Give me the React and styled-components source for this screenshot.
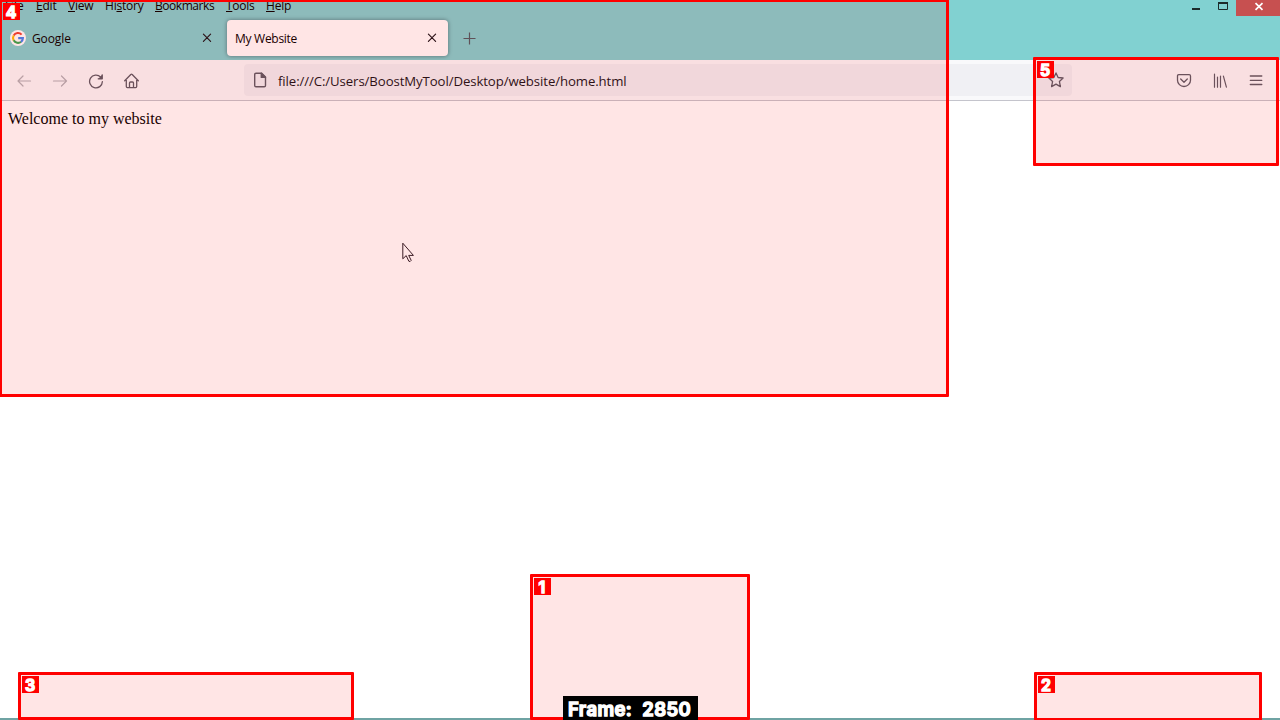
import React from 'react';
import styled, { createGlobalStyle } from 'styled-components';

const GlobalStyle = createGlobalStyle`
  * { box-sizing: border-box; }
  body { margin: 0; overflow: hidden; background: #fff; }
`;

const Screen = styled.div`
  position: relative;
  display: flex;
  flex-direction: column;
  width: 1280px;
  height: 720px;
  overflow: hidden;
  background: #fff;
  color: #15141a;
  font-family: 'Open Sans', 'Noto Sans', sans-serif;
`;

const TitleBar = styled.header`
  display: flex;
  flex-direction: column;
  flex: none;
  height: 60px;
  background: #81d1d1;
`;

const TopRow = styled.div`
  display: flex;
  justify-content: space-between;
  height: 16px;
`;

const Menu = styled.nav`
  display: flex;
  padding-left: 5px;
  color: #000;
`;

const MenuItem = styled.span`
  width: ${(p) => p.$width}px;
  font-size: 12px;
  line-height: 16px;
  height: 16px;
  margin-top: -2px;
  letter-spacing: ${(p) => p.$tracking || 0}px;
  white-space: nowrap;
  u { text-underline-offset: 1px; text-decoration-thickness: 1px; }
`;

const WindowControls = styled.div`
  display: flex;
`;

const ControlButton = styled.div`
  width: ${(p) => p.$width}px;
  height: 16px;
  background: ${(p) => (p.$close ? '#c75050' : 'transparent')};
  svg { display: block; }
`;

const TabStrip = styled.div`
  display: flex;
  height: 44px;
  padding: 4px 0 4px 2px;
`;

const Tab = styled.div`
  display: flex;
  align-items: center;
  width: ${(p) => (p.$active ? 221 : 225)}px;
  height: 36px;
  padding: 0 8px;
  padding-right: ${(p) => (p.$active ? 11 : 15)}px;
  border-radius: 4px;
  background: ${(p) => (p.$active ? '#fff' : 'transparent')};
  box-shadow: ${(p) => (p.$active ? '0 0 4px rgba(20, 50, 60, 0.55)' : 'none')};
`;

const TabTitle = styled.span`
  flex: 1;
  margin-left: ${(p) => (p.$icon ? 6 : 0)}px;
  padding-top: 2px;
  color: #000;
  font-size: 12px;
  line-height: 16px;
  letter-spacing: ${(p) => p.$tracking || 0}px;
`;

const NewTab = styled.div`
  display: flex;
  align-items: center;
  margin-left: 15px;
`;

const Toolbar = styled.div`
  display: flex;
  flex: none;
  align-items: center;
  height: 41px;
  padding: 0 6px 0 6px;
  background: #f9f9fb;
  border-bottom: 1px solid #c4c4cc;
  color: #5b5b66;
`;

const ToolButton = styled.div`
  display: flex;
  align-items: center;
  justify-content: center;
  width: 36px;
  height: 32px;
  padding-top: 1px;
  opacity: ${(p) => (p.$disabled ? 0.45 : 1)};
`;

const AddressBar = styled.div`
  display: flex;
  align-items: center;
  width: 828px;
  height: 32px;
  margin: 0 94px;
  padding: 0 8px;
  border-radius: 4px;
  background: #f0f0f4;
`;

const Address = styled.span`
  flex: 1;
  margin-left: 10px;
  padding-top: 2px;
  color: #15141a;
  font-size: 13.2px;
  line-height: 20px;
  letter-spacing: -0.09px;
`;

const Content = styled.main`
  flex: 1;
  padding: 9px 8px;
  color: #000;
  font-family: 'Liberation Serif', serif;
  font-size: 16px;
  line-height: 18px;
`;

const TaskbarEdge = styled.div`
  flex: none;
  height: 2px;
  background: #6fa3a3;
`;

const Region = styled.div`
  position: absolute;
  left: ${(p) => p.$x}px;
  top: ${(p) => p.$y}px;
  width: ${(p) => p.$w}px;
  height: ${(p) => p.$h}px;
  padding: 1px;
  border: 3px solid #f00;
  border-radius: 1px;
  background: rgba(255, 0, 0, 0.1);
  background-clip: padding-box;
`;

const RegionNumber = styled.div`
  width: 17px;
  height: 17px;
  background: #f00;
  color: #fff;
  font: 600 16px/18px Inter, sans-serif;
  text-align: center;
  text-indent: -1px;
  -webkit-text-stroke: 1.4px #fff;
`;

const FrameCaption = styled.div`
  position: absolute;
  left: 563px;
  top: 696px;
  width: 135px;
  height: 24px;
  padding-left: 5px;
  background: #000;
  color: #fff;
  font: 600 18.5px/27px Inter, sans-serif;
  letter-spacing: 0.4px;
  white-space: pre;
  -webkit-text-stroke: 1.4px #fff;
`;

const Pointer = styled.svg`
  position: absolute;
  left: 402px;
  top: 242px;
`;

const Stroke = ({ size = 16, width = 1.2, children }) => (
  <svg width={size} height={size} viewBox="0 0 16 16" fill="none" stroke="currentColor" strokeWidth={width} strokeLinecap="round" strokeLinejoin="round">
    {children}
  </svg>
);

const GoogleIcon = () => (
  <svg width="16" height="16" viewBox="0 0 16 16">
    <circle cx="8" cy="8" r="8" fill="#fff" />
    <g fill="none" strokeWidth="2.1">
      <path d="M3.7 5.6A4.9 4.9 0 0 1 11.6 4.6" stroke="#ea4335" />
      <path d="M3.7 5.5A4.9 4.9 0 0 0 3.7 10.5" stroke="#fbbc05" />
      <path d="M3.7 10.3A4.9 4.9 0 0 0 11.1 11.8" stroke="#34a853" />
      <path d="M11 11.8A4.9 4.9 0 0 0 12.9 8.1H8.2" stroke="#4285f4" />
    </g>
  </svg>
);

const CloseIcon = () => (
  <svg width="10" height="10" viewBox="0 0 10 10" stroke="#15141a" strokeWidth="1.15" strokeLinecap="round">
    <path d="M1.4 1.2l7.2 7.2M8.6 1.2L1.4 8.4" />
  </svg>
);

const MENU = [
  ['F', 'ile', 31, -0.1],
  ['E', 'dit', 32, -0.2],
  ['V', 'iew', 37, -0.2],
  ['Hi', 'story', 50, -0.2],
  ['B', 'ookmarks', 71, -0.45],
  ['T', 'ools', 40, -0.3],
  ['H', 'elp', 40, -0.2],
];

const REGIONS = [
  { n: 1, x: 530, y: 574, w: 220, h: 146 },
  { n: 2, x: 1034, y: 672, w: 228, h: 49 },
  { n: 3, x: 18, y: 672, w: 336, h: 48 },
  { n: 4, x: -1, y: -1, w: 950, h: 398 },
  { n: 5, x: 1033, y: 57, w: 246, h: 109 },
];

export default function App() {
  return (
    <Screen>
      <GlobalStyle />
      <TitleBar>
        <TopRow>
          <Menu>
            {MENU.map(([key, rest, width, tracking]) => (
              <MenuItem key={key} $width={width} $tracking={tracking}>
                {key === 'Hi' ? <>Hi<u>s</u>tory</> : <><u>{key}</u>{rest}</>}
              </MenuItem>
            ))}
          </Menu>
          <WindowControls>
            <ControlButton $width={26}>
              <svg width="26" height="16"><path d="M8 9h8" stroke="#1d2b2b" strokeWidth="2" /></svg>
            </ControlButton>
            <ControlButton $width={26}>
              <svg width="26" height="16"><path d="M8.5 3v6.5h9V3" fill="none" stroke="#1d2b2b" /><path d="M8 3h10" stroke="#1d2b2b" strokeWidth="2" /></svg>
            </ControlButton>
            <ControlButton $width={44} $close>
              <svg width="44" height="16"><path d="M19.5 3.2l7 6.6M26.5 3.2l-7 6.6" stroke="#fff" strokeWidth="1.7" /></svg>
            </ControlButton>
          </WindowControls>
        </TopRow>
        <TabStrip>
          <Tab>
            <GoogleIcon />
            <TabTitle $icon $tracking={-0.1}>Google</TabTitle>
            <CloseIcon />
          </Tab>
          <Tab $active>
            <TabTitle $tracking={-0.28}>My Website</TabTitle>
            <CloseIcon />
          </Tab>
          <NewTab>
            <svg width="13" height="13" viewBox="0 0 13 13" stroke="#4d5b63" strokeWidth="1.2"><path d="M6.5 .5v12M.5 6.5h12" /></svg>
          </NewTab>
        </TabStrip>
      </TitleBar>

      <Toolbar>
        <ToolButton $disabled><Stroke><path d="M14.5 8H2M7 3L2 8l5 5" /></Stroke></ToolButton>
        <ToolButton $disabled><Stroke><path d="M1.5 8H14.500M9.500 3l5 5-5 5" /></Stroke></ToolButton>
        <ToolButton>
          <Stroke width={1.3}>
            <path d="M12.6 4A6.4 6.4 0 1 0 14.4 8.6" />
            <path d="M14.4 1.6v4.3h-4.3z" fill="currentColor" stroke="none" />
            <path d="M14.2 1.8v4h-4" />
          </Stroke>
        </ToolButton>
        <ToolButton>
          <Stroke width={1.3}>
            <path d="M.7 7.8L6.8 1.5q.7-.6 1.4 0l6.1 6.3M2.3 7v6.600q0 1.100 1.100 1.100h8.200q1.100 0 1.100-1.100V7M5.500 14.500V10q0-1 1-1h2q1 0 1 1v4.500" />
          </Stroke>
        </ToolButton>
        <AddressBar>
          <Stroke width={1.4}>
            <path d="M2.7 2.5q0-1.3 1.3-1.3h5.7l3.8 3.8v8.4q0 1.3-1.3 1.3H4q-1.3 0-1.3-1.3z" />
            <path d="M9.3 1.2v4.2h4.2z" fill="currentColor" />
          </Stroke>
          <Address>file:///C:/Users/BoostMyTool/Desktop/website/home.html</Address>
          <Stroke width={1.3}>
            <path d="M8 .9l2.1 4.6 5 .5-3.7 3.4 1 5.2L8 12.1l-4.4 2.5 1-5.2L.9 6l5-.5z" />
          </Stroke>
        </AddressBar>
        <ToolButton>
          <Stroke width={1.3}>
            <path d="M2.8 1.7h10.4q1.300 0 1.300 1.300v4.200a6.500 6.300 0 0 1-13 0V3Q1.500 1.700 2.800 1.700zM4.700 6L8 9.200l3.300-3.200" />
          </Stroke>
        </ToolButton>
        <ToolButton>
          <Stroke width={1.2}><path d="M2.5 1.2v13M5.500 4v10.200M8.500 3v11.200M11.400 3.200l3 11" /></Stroke>
        </ToolButton>
        <ToolButton>
          <Stroke width={1.3}><path d="M2.3 3h11.500M2.300 7.300h11.500M2.300 11.500h11.500" /></Stroke>
        </ToolButton>
      </Toolbar>

      <Content>Welcome to my website</Content>
      <TaskbarEdge />

      <Pointer width="13" height="22" viewBox="0 0 13 22">
        <path d="M.8 1.2v15.600l3.400-3.200 2.600 5.600q1.400 1 2.400-.8l-2.500-5h4.700z" fill="#fff" stroke="#27202a" strokeWidth="1" />
      </Pointer>

      {REGIONS.map((r) => (
        <Region key={r.n} $x={r.x} $y={r.y} $w={r.w} $h={r.h}>
          <RegionNumber>{r.n}</RegionNumber>
        </Region>
      ))}
      <FrameCaption>Frame:  2850</FrameCaption>
    </Screen>
  );
}
